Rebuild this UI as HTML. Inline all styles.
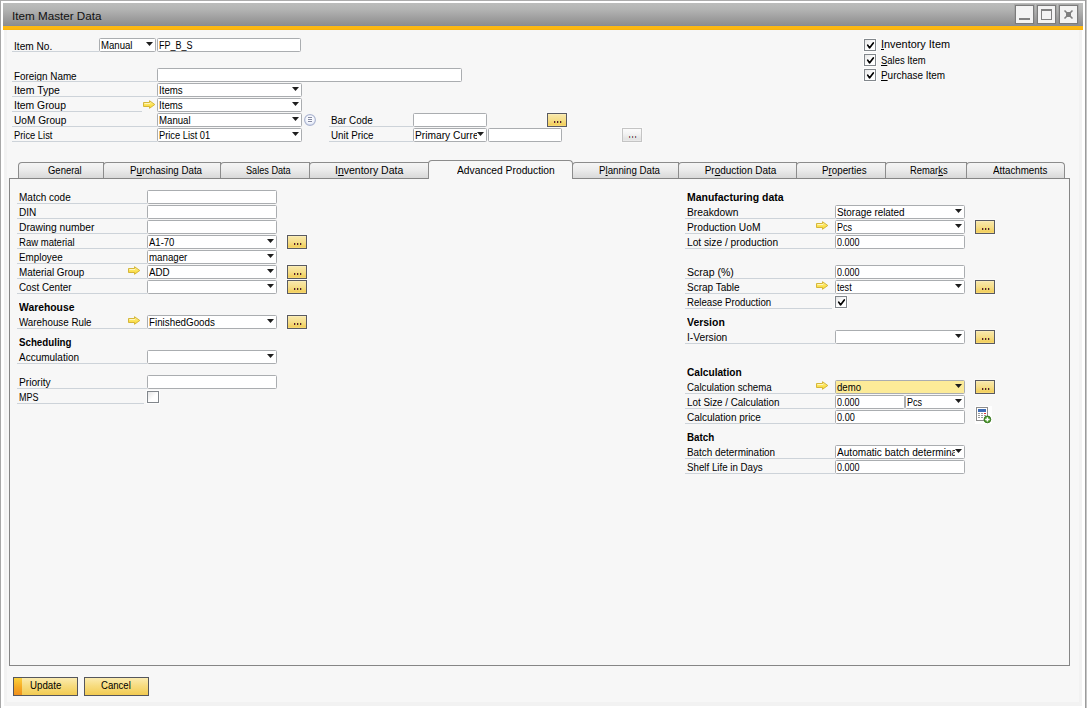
<!DOCTYPE html>
<html lang="en"><head><meta charset="utf-8"><title>Item Master Data</title>
<style>
html,body{margin:0;padding:0;}
body{width:1087px;height:708px;overflow:hidden;background:#fff;position:relative;
 font-family:"Liberation Sans",Arial,sans-serif;font-size:10px;line-height:12px;color:#000;}
#win{position:absolute;left:0;top:0;width:1087px;height:708px;overflow:hidden;background:#fff;}
#win *{position:absolute;box-sizing:content-box;}
.t{white-space:nowrap;height:12px;line-height:12px;transform-origin:0 50%;}
.t u{position:static;text-decoration:underline;text-underline-offset:1px;text-decoration-thickness:1px;}
#win .t u{position:static}
.ul{height:1px;display:block;}
.f{border:1px solid #aaadb0;border-radius:1.5px;background:#fff;overflow:hidden;}
.f .clip{left:0;top:0;height:12px;overflow:hidden;}
.yb{width:18px;height:12px;border:1px solid #595a62;background:linear-gradient(#fbefbe,#f8e6a4 12%,#f6de8a 50%,#f3d060 88%,#f7dc7c);box-shadow:0 0 0 1px rgba(255,255,255,.4);}
.yb b{width:1px;height:2px;background:#64122c;top:7px;box-shadow:1px 0 0 rgba(120,165,70,.6);}
.yb b:nth-child(1){left:6px}.yb b:nth-child(2){left:9px}.yb b:nth-child(3){left:12px}
.yb.dis{border-color:#c4c4c4;background:linear-gradient(#fbfbfb,#f3f3f3 40%,#e2e2e2 85%,#ededed);}
.yb.dis b{background:#a25c7a;box-shadow:1px 0 0 rgba(170,215,235,.9),-1px 0 0 rgba(235,235,180,.8);}
.cb{width:10px;height:10px;border:1px solid #82878c;background:linear-gradient(135deg,#e6e6e6,#fff 55%);box-shadow:0 0 0 1px rgba(255,255,255,.7);}
.cb svg{left:0;top:0}
.tab{height:15px;top:162px;border:1px solid #8c8c8c;border-bottom:none;border-radius:4px 0 0 0;
 background:linear-gradient(#f5f5f5,#ececec 45%,#d9d9d9);}
.tab.act{top:160px;height:18px;background:#f7f7f7;border-radius:4px 4px 0 0;border-color:#8c8c8c;}
.btn{height:17px;border:1px solid #55565c;background:linear-gradient(#fbebb0,#f7dc80 45%,#f2cb52);}
.wb{width:17px;height:17px;top:5px;border:1px solid #7b7b7b;background:#f3f3f3;box-shadow:0 0 0 1px rgba(140,140,140,.35);}
</style></head><body><div id="win">
<svg width="0" height="0" style="left:0;top:0"><defs>
<linearGradient id="ag" x1="0" y1="0" x2="0" y2="1"><stop offset="0" stop-color="#fdf09a"/><stop offset=".5" stop-color="#fce45c"/><stop offset="1" stop-color="#f9d326"/></linearGradient>
</defs></svg>

<div style="left:0;top:0;width:1087px;height:1px;background:#acacac"></div>
<div style="left:0;top:0;width:1px;height:708px;background:#a8a8a8"></div>
<div style="left:1085px;top:0;width:1px;height:708px;background:#9c9c9c"></div>
<div style="left:1086px;top:0;width:1px;height:708px;background:#c6c6c6"></div>
<div style="left:3px;top:3px;width:1080px;height:22px;background:linear-gradient(#bcbdbc,#b3b4b3 30%,#9e9e9e 70%,#8f8f8f)"></div>
<div style="left:3px;top:25px;width:1080px;height:1px;background:#878c98"></div>
<div style="left:3px;top:26px;width:1080px;height:4px;background:linear-gradient(#fcb914,#fcb711 70%,#f9b10a)"></div>
<div style="left:4px;top:30px;width:1078px;height:676px;background:#f2f2f2"></div>
<div style="left:7px;top:30px;width:1072px;height:672px;background:#f7f7f7"></div>
<span class="t" style="left:12.00px;top:9.65px;font-size:11.5px;line-height:13.8px;color:#111;transform:scaleX(1.0149);">Item Master Data</span>
<div class="wb" style="left:1015px">
<i style="left:3px;top:12px;width:11px;height:2px;background:#808080"></i>
</div>
<div class="wb" style="left:1037px">
<i style="left:3px;top:3px;width:9px;height:8px;border:1px solid #808080;border-top-width:2px"></i>
</div>
<div class="wb" style="left:1059px">
<svg width="17" height="17" viewBox="0 0 17 17" style="left:0;top:0"><path d="M4.5 4.5L12.5 12.5M12.5 4.5L4.5 12.5" stroke="#808080" stroke-width="1.6"/><rect x="6" y="6" width="5" height="5" fill="#808080"/></svg>
</div>
<span class="t" style="left:14.00px;top:41.00px;transform:scaleX(1.0136);">Item No.</span>
<i class="ul" style="left:12px;top:51px;width:87px;background:#cdd3d9"></i>
<div class="f" style="left:99px;top:38px;width:55px;height:12px;">
<span class="t" style="left:1.4px;top:1.00px;transform:scaleX(0.9605);">Manual</span>
<svg class="dd" width="7" height="4" viewBox="0 0 7 4" style="left:46px;top:3px"><path d="M0 0H7L3.5 4Z" fill="#1e1e1e"/></svg>
</div>
<div class="f" style="left:157px;top:38px;width:142px;height:12px;">
<span class="t" style="left:1.4px;top:1.00px;transform:scaleX(0.9022);">FP_B_S</span>
</div>
<span class="t" style="left:14.00px;top:71.00px;transform:scaleX(0.9881);">Foreign Name</span>
<i class="ul" style="left:12px;top:81px;width:145px;background:#cdd3d9"></i>
<span class="t" style="left:14.00px;top:85.00px;transform:scaleX(1.0498);">Item Type</span>
<i class="ul" style="left:12px;top:96px;width:145px;background:#cdd3d9"></i>
<span class="t" style="left:14.00px;top:100.00px;transform:scaleX(1.0377);">Item Group</span>
<i class="ul" style="left:12px;top:111px;width:130px;background:#cdd3d9"></i>
<span class="t" style="left:14.00px;top:115.00px;transform:scaleX(1.0120);">UoM Group</span>
<i class="ul" style="left:12px;top:126px;width:145px;background:#cdd3d9"></i>
<span class="t" style="left:14.00px;top:130.00px;transform:scaleX(0.9338);">Price List</span>
<i class="ul" style="left:12px;top:141px;width:145px;background:#cdd3d9"></i>
<div class="f" style="left:157px;top:68px;width:303px;height:12px;">
</div>
<div class="f" style="left:157px;top:83px;width:143px;height:12px;">
<span class="t" style="left:1.4px;top:1.00px;transform:scaleX(0.9694);">Items</span>
<svg class="dd" width="7" height="4" viewBox="0 0 7 4" style="left:134px;top:3px"><path d="M0 0H7L3.5 4Z" fill="#1e1e1e"/></svg>
</div>
<svg class="ar" width="13" height="10" viewBox="0 0 13 10" style="left:143px;top:100px"><path d="M0.5 2.5H6.5V0.7L11.8 4.5L6.5 8.3V6.5H0.5Z" fill="url(#ag)" stroke="#d0b02c" stroke-width=".9" stroke-linejoin="round"/><path d="M1.5 3.5H7" stroke="#fff6c0" stroke-width="1"/></svg>
<div class="f" style="left:157px;top:98px;width:143px;height:12px;">
<span class="t" style="left:1.4px;top:1.00px;transform:scaleX(0.9694);">Items</span>
<svg class="dd" width="7" height="4" viewBox="0 0 7 4" style="left:134px;top:3px"><path d="M0 0H7L3.5 4Z" fill="#1e1e1e"/></svg>
</div>
<div class="f" style="left:157px;top:113px;width:143px;height:12px;">
<span class="t" style="left:1.4px;top:1.00px;transform:scaleX(0.9636);">Manual</span>
<svg class="dd" width="7" height="4" viewBox="0 0 7 4" style="left:134px;top:3px"><path d="M0 0H7L3.5 4Z" fill="#1e1e1e"/></svg>
</div>
<div class="f" style="left:157px;top:128px;width:143px;height:12px;">
<span class="t" style="left:1.4px;top:1.00px;transform:scaleX(0.9305);">Price List 01</span>
<svg class="dd" width="7" height="4" viewBox="0 0 7 4" style="left:134px;top:3px"><path d="M0 0H7L3.5 4Z" fill="#1e1e1e"/></svg>
</div>
<svg width="12" height="12" viewBox="0 0 12 12" style="left:304px;top:114px"><defs><radialGradient id="cg" cx=".5" cy=".4" r=".6"><stop offset="0" stop-color="#fff"/><stop offset=".6" stop-color="#f4f6fd"/><stop offset="1" stop-color="#d4dcf0"/></radialGradient></defs><circle cx="6" cy="6" r="5.4" fill="url(#cg)" stroke="#acb5d0" stroke-width="1.1"/><path d="M4 3.5H8M4 5.5H8M4 7.5H8" stroke="#858aa2" stroke-width="1"/></svg>
<span class="t" style="left:331.00px;top:115.00px;transform:scaleX(0.9871);">Bar Code</span>
<i class="ul" style="left:329px;top:126px;width:84px;background:#cdd3d9"></i>
<div class="f" style="left:413px;top:113px;width:72px;height:12px;">
</div>
<span class="t" style="left:331.00px;top:130.00px;transform:scaleX(0.9805);">Unit Price</span>
<i class="ul" style="left:329px;top:141px;width:84px;background:#cdd3d9"></i>
<div class="f" style="left:413px;top:128px;width:72px;height:12px;">
<span class="clip" style="width:63px">
<span class="t" style="left:1.4px;top:1.00px;transform:scaleX(1.0218);">Primary Currency</span></span>
<svg class="dd" width="7" height="4" viewBox="0 0 7 4" style="left:63px;top:3px"><path d="M0 0H7L3.5 4Z" fill="#1e1e1e"/></svg>
</div>
<div class="f" style="left:488px;top:128px;width:72px;height:12px;">
</div>
<div class="yb" style="left:547px;top:113px"><b></b><b></b><b></b></div>
<div class="yb dis" style="left:622px;top:128px"><b></b><b></b><b></b></div>
<div class="cb" style="left:864px;top:39px">
<svg width="10" height="10" viewBox="0 0 10 10"><path d="M2.7 5.1L4.5 7.9L8.3 3" fill="none" stroke="#000" stroke-width="1.7" stroke-linecap="round" stroke-linejoin="round"/></svg>
</div>
<span class="t" style="left:881.00px;top:39.00px;transform:scaleX(1.0891);"><u>I</u>nventory Item</span>
<div class="cb" style="left:864px;top:54px">
<svg width="10" height="10" viewBox="0 0 10 10"><path d="M2.7 5.1L4.5 7.9L8.3 3" fill="none" stroke="#000" stroke-width="1.7" stroke-linecap="round" stroke-linejoin="round"/></svg>
</div>
<span class="t" style="left:881.00px;top:55.00px;transform:scaleX(0.9441);"><u>S</u>ales Item</span>
<div class="cb" style="left:864px;top:69px">
<svg width="10" height="10" viewBox="0 0 10 10"><path d="M2.7 5.1L4.5 7.9L8.3 3" fill="none" stroke="#000" stroke-width="1.7" stroke-linecap="round" stroke-linejoin="round"/></svg>
</div>
<span class="t" style="left:881.00px;top:70.00px;transform:scaleX(0.9927);"><u>P</u>urchase Item</span>
<div style="left:9px;top:178px;width:1059px;height:486px;border:1px solid #868686;background:#f7f7f7"></div>
<div class="tab" style="left:18px;width:84px;"></div>
<div class="tab" style="left:103px;width:116px;"></div>
<div class="tab" style="left:220px;width:88px;"></div>
<div class="tab" style="left:309px;width:118px;"></div>
<div class="tab act" style="left:428px;width:143px;"></div>
<div class="tab" style="left:572px;width:105px;"></div>
<div class="tab" style="left:678px;width:117px;"></div>
<div class="tab" style="left:796px;width:88px;"></div>
<div class="tab" style="left:885px;width:80px;"></div>
<div class="tab" style="left:966px;width:97px;border-radius:4px 4px 0 0;"></div>
<span class="t" style="left:48.00px;top:165.00px;transform:scaleX(0.9473);">General</span>
<span class="t" style="left:129.70px;top:165.00px;transform:scaleX(0.9739);">P<u>u</u>rchasing Data</span>
<span class="t" style="left:246.10px;top:165.00px;transform:scaleX(0.9138);">Sales Data</span>
<span class="t" style="left:335.40px;top:165.00px;transform:scaleX(1.0503);">I<u>n</u>ventory Data</span>
<span class="t" style="left:456.70px;top:165.00px;transform:scaleX(1.0288);">Advanced Production</span>
<span class="t" style="left:598.70px;top:165.00px;transform:scaleX(0.9710);">P<u>l</u>anning Data</span>
<span class="t" style="left:704.70px;top:165.00px;">Pr<u>o</u>duction Data</span>
<span class="t" style="left:821.60px;top:165.00px;transform:scaleX(0.9764);">P<u>r</u>operties</span>
<span class="t" style="left:910.30px;top:165.00px;transform:scaleX(0.9399);">Remar<u>k</u>s</span>
<span class="t" style="left:992.90px;top:165.00px;transform:scaleX(0.9770);">Attachments</span>
<span class="t" style="left:19.00px;top:192.00px;">Match code</span>
<i class="ul" style="left:17px;top:203px;width:130px;background:#cdd3d9"></i>
<div class="f" style="left:147px;top:190px;width:128px;height:12px;">
</div>
<span class="t" style="left:19.00px;top:207.00px;transform:scaleX(1.0045);">DIN</span>
<i class="ul" style="left:17px;top:218px;width:130px;background:#cdd3d9"></i>
<div class="f" style="left:147px;top:205px;width:128px;height:12px;">
</div>
<span class="t" style="left:19.00px;top:222.00px;transform:scaleX(1.0278);">Drawing number</span>
<i class="ul" style="left:17px;top:233px;width:130px;background:#cdd3d9"></i>
<div class="f" style="left:147px;top:220px;width:128px;height:12px;">
</div>
<span class="t" style="left:19.00px;top:237.00px;transform:scaleX(0.9529);">Raw material</span>
<i class="ul" style="left:17px;top:248px;width:130px;background:#cdd3d9"></i>
<div class="f" style="left:147px;top:235px;width:128px;height:12px;">
<span class="t" style="left:1.4px;top:1.00px;transform:scaleX(0.9519);">A1-70</span>
<svg class="dd" width="7" height="4" viewBox="0 0 7 4" style="left:119px;top:3px"><path d="M0 0H7L3.5 4Z" fill="#1e1e1e"/></svg>
</div>
<div class="yb" style="left:287px;top:235px"><b></b><b></b><b></b></div>
<span class="t" style="left:19.00px;top:252.00px;transform:scaleX(0.9828);">Employee</span>
<i class="ul" style="left:17px;top:263px;width:130px;background:#cdd3d9"></i>
<div class="f" style="left:147px;top:250px;width:128px;height:12px;">
<span class="t" style="left:1.4px;top:1.00px;transform:scaleX(0.9705);">manager</span>
<svg class="dd" width="7" height="4" viewBox="0 0 7 4" style="left:119px;top:3px"><path d="M0 0H7L3.5 4Z" fill="#1e1e1e"/></svg>
</div>
<span class="t" style="left:19.00px;top:267.00px;transform:scaleX(0.9874);">Material Group</span>
<i class="ul" style="left:17px;top:278px;width:130px;background:#cdd3d9"></i>
<svg class="ar" width="13" height="10" viewBox="0 0 13 10" style="left:128px;top:266px"><path d="M0.5 2.5H6.5V0.7L11.8 4.5L6.5 8.3V6.5H0.5Z" fill="url(#ag)" stroke="#d0b02c" stroke-width=".9" stroke-linejoin="round"/><path d="M1.5 3.5H7" stroke="#fff6c0" stroke-width="1"/></svg>
<div class="f" style="left:147px;top:265px;width:128px;height:12px;">
<span class="t" style="left:1.4px;top:1.00px;transform:scaleX(0.9757);">ADD</span>
<svg class="dd" width="7" height="4" viewBox="0 0 7 4" style="left:119px;top:3px"><path d="M0 0H7L3.5 4Z" fill="#1e1e1e"/></svg>
</div>
<div class="yb" style="left:287px;top:265px"><b></b><b></b><b></b></div>
<span class="t" style="left:19.00px;top:282.00px;transform:scaleX(0.9840);">Cost Center</span>
<i class="ul" style="left:17px;top:293px;width:130px;background:#cdd3d9"></i>
<div class="f" style="left:147px;top:280px;width:128px;height:12px;">
<svg class="dd" width="7" height="4" viewBox="0 0 7 4" style="left:119px;top:3px"><path d="M0 0H7L3.5 4Z" fill="#1e1e1e"/></svg>
</div>
<div class="yb" style="left:287px;top:280px"><b></b><b></b><b></b></div>
<span class="t" style="left:19.00px;top:302.00px;font-weight:bold;transform:scaleX(1.0350);">Warehouse</span>
<span class="t" style="left:19.00px;top:317.00px;transform:scaleX(0.9783);">Warehouse Rule</span>
<i class="ul" style="left:17px;top:328px;width:130px;background:#cdd3d9"></i>
<svg class="ar" width="13" height="10" viewBox="0 0 13 10" style="left:128px;top:316px"><path d="M0.5 2.5H6.5V0.7L11.8 4.5L6.5 8.3V6.5H0.5Z" fill="url(#ag)" stroke="#d0b02c" stroke-width=".9" stroke-linejoin="round"/><path d="M1.5 3.5H7" stroke="#fff6c0" stroke-width="1"/></svg>
<div class="f" style="left:147px;top:315px;width:128px;height:12px;">
<span class="t" style="left:1.4px;top:1.00px;transform:scaleX(0.9798);">FinishedGoods</span>
<svg class="dd" width="7" height="4" viewBox="0 0 7 4" style="left:119px;top:3px"><path d="M0 0H7L3.5 4Z" fill="#1e1e1e"/></svg>
</div>
<div class="yb" style="left:287px;top:315px"><b></b><b></b><b></b></div>
<span class="t" style="left:19.00px;top:337.00px;font-weight:bold;transform:scaleX(0.9743);">Scheduling</span>
<span class="t" style="left:19.00px;top:352.00px;">Accumulation</span>
<i class="ul" style="left:17px;top:363px;width:130px;background:#cdd3d9"></i>
<div class="f" style="left:147px;top:350px;width:128px;height:12px;">
<svg class="dd" width="7" height="4" viewBox="0 0 7 4" style="left:119px;top:3px"><path d="M0 0H7L3.5 4Z" fill="#1e1e1e"/></svg>
</div>
<span class="t" style="left:19.00px;top:377.00px;transform:scaleX(1.0189);">Priority</span>
<i class="ul" style="left:17px;top:388px;width:130px;background:#cdd3d9"></i>
<div class="f" style="left:147px;top:375px;width:128px;height:12px;">
</div>
<span class="t" style="left:19.00px;top:392.00px;transform:scaleX(0.8998);">MPS</span>
<i class="ul" style="left:17px;top:403px;width:127px;background:#cdd3d9"></i>
<div class="cb" style="left:147px;top:391px">
</div>
<span class="t" style="left:687.00px;top:192.00px;font-weight:bold;transform:scaleX(1.0464);">Manufacturing data</span>
<span class="t" style="left:687.00px;top:207.00px;transform:scaleX(1.0275);">Breakdown</span>
<i class="ul" style="left:685px;top:218px;width:150px;background:#cdd3d9"></i>
<div class="f" style="left:835px;top:205px;width:128px;height:12px;">
<span class="t" style="left:1.4px;top:1.00px;transform:scaleX(0.9887);">Storage related</span>
<svg class="dd" width="7" height="4" viewBox="0 0 7 4" style="left:119px;top:3px"><path d="M0 0H7L3.5 4Z" fill="#1e1e1e"/></svg>
</div>
<span class="t" style="left:687.00px;top:222.00px;transform:scaleX(1.0238);">Production UoM</span>
<i class="ul" style="left:685px;top:233px;width:150px;background:#cdd3d9"></i>
<svg class="ar" width="13" height="10" viewBox="0 0 13 10" style="left:816px;top:221px"><path d="M0.5 2.5H6.5V0.7L11.8 4.5L6.5 8.3V6.5H0.5Z" fill="url(#ag)" stroke="#d0b02c" stroke-width=".9" stroke-linejoin="round"/><path d="M1.5 3.5H7" stroke="#fff6c0" stroke-width="1"/></svg>
<div class="f" style="left:835px;top:220px;width:128px;height:12px;">
<span class="t" style="left:1.4px;top:1.00px;transform:scaleX(0.9058);">Pcs</span>
<svg class="dd" width="7" height="4" viewBox="0 0 7 4" style="left:119px;top:3px"><path d="M0 0H7L3.5 4Z" fill="#1e1e1e"/></svg>
</div>
<div class="yb" style="left:975px;top:220px"><b></b><b></b><b></b></div>
<span class="t" style="left:687.00px;top:237.00px;transform:scaleX(1.0191);">Lot size / production</span>
<i class="ul" style="left:685px;top:248px;width:150px;background:#cdd3d9"></i>
<div class="f" style="left:835px;top:235px;width:128px;height:12px;">
<span class="t" style="left:1.4px;top:1.00px;transform:scaleX(0.8992);">0.000</span>
</div>
<span class="t" style="left:687.00px;top:267.00px;transform:scaleX(1.0528);">Scrap (%)</span>
<i class="ul" style="left:685px;top:278px;width:150px;background:#cdd3d9"></i>
<div class="f" style="left:835px;top:265px;width:128px;height:12px;">
<span class="t" style="left:1.4px;top:1.00px;transform:scaleX(0.8992);">0.000</span>
</div>
<span class="t" style="left:687.00px;top:282.00px;">Scrap Table</span>
<i class="ul" style="left:685px;top:293px;width:150px;background:#cdd3d9"></i>
<svg class="ar" width="13" height="10" viewBox="0 0 13 10" style="left:816px;top:281px"><path d="M0.5 2.5H6.5V0.7L11.8 4.5L6.5 8.3V6.5H0.5Z" fill="url(#ag)" stroke="#d0b02c" stroke-width=".9" stroke-linejoin="round"/><path d="M1.5 3.5H7" stroke="#fff6c0" stroke-width="1"/></svg>
<div class="f" style="left:835px;top:280px;width:128px;height:12px;">
<span class="t" style="left:1.4px;top:1.00px;transform:scaleX(0.9121);">test</span>
<svg class="dd" width="7" height="4" viewBox="0 0 7 4" style="left:119px;top:3px"><path d="M0 0H7L3.5 4Z" fill="#1e1e1e"/></svg>
</div>
<div class="yb" style="left:975px;top:280px"><b></b><b></b><b></b></div>
<span class="t" style="left:687.00px;top:297.00px;transform:scaleX(0.9637);">Release Production</span>
<i class="ul" style="left:685px;top:308px;width:147px;background:#cdd3d9"></i>
<div class="cb" style="left:835px;top:296px">
<svg width="10" height="10" viewBox="0 0 10 10"><path d="M2.7 5.1L4.5 7.9L8.3 3" fill="none" stroke="#000" stroke-width="1.7" stroke-linecap="round" stroke-linejoin="round"/></svg>
</div>
<span class="t" style="left:687.00px;top:317.00px;font-weight:bold;transform:scaleX(1.0463);">Version</span>
<span class="t" style="left:687.00px;top:332.00px;transform:scaleX(1.0213);">I-Version</span>
<i class="ul" style="left:685px;top:343px;width:150px;background:#cdd3d9"></i>
<div class="f" style="left:835px;top:330px;width:128px;height:12px;">
<svg class="dd" width="7" height="4" viewBox="0 0 7 4" style="left:119px;top:3px"><path d="M0 0H7L3.5 4Z" fill="#1e1e1e"/></svg>
</div>
<div class="yb" style="left:975px;top:330px"><b></b><b></b><b></b></div>
<span class="t" style="left:687.00px;top:367.00px;font-weight:bold;transform:scaleX(1.0150);">Calculation</span>
<span class="t" style="left:687.00px;top:382.00px;transform:scaleX(0.9707);">Calculation schema</span>
<i class="ul" style="left:685px;top:393px;width:150px;background:#cdd3d9"></i>
<svg class="ar" width="13" height="10" viewBox="0 0 13 10" style="left:816px;top:381px"><path d="M0.5 2.5H6.5V0.7L11.8 4.5L6.5 8.3V6.5H0.5Z" fill="url(#ag)" stroke="#d0b02c" stroke-width=".9" stroke-linejoin="round"/><path d="M1.5 3.5H7" stroke="#fff6c0" stroke-width="1"/></svg>
<div class="f" style="left:835px;top:380px;width:128px;height:12px;background:#fceb98;">
<span class="t" style="left:1.4px;top:1.00px;transform:scaleX(0.9595);">demo</span>
<svg class="dd" width="7" height="4" viewBox="0 0 7 4" style="left:119px;top:3px"><path d="M0 0H7L3.5 4Z" fill="#1e1e1e"/></svg>
</div>
<div class="yb" style="left:975px;top:380px"><b></b><b></b><b></b></div>
<span class="t" style="left:687.00px;top:397.00px;transform:scaleX(0.9836);">Lot Size / Calculation</span>
<i class="ul" style="left:685px;top:408px;width:150px;background:#cdd3d9"></i>
<div class="f" style="left:835px;top:395px;width:68px;height:12px;">
<span class="t" style="left:1.4px;top:1.00px;transform:scaleX(0.8992);">0.000</span>
</div>
<div class="f" style="left:905px;top:395px;width:58px;height:12px;">
<span class="t" style="left:1.4px;top:1.00px;transform:scaleX(0.9058);">Pcs</span>
<svg class="dd" width="7" height="4" viewBox="0 0 7 4" style="left:49px;top:3px"><path d="M0 0H7L3.5 4Z" fill="#1e1e1e"/></svg>
</div>
<span class="t" style="left:687.00px;top:412.00px;">Calculation price</span>
<i class="ul" style="left:685px;top:423px;width:150px;background:#cdd3d9"></i>
<div class="f" style="left:835px;top:410px;width:128px;height:12px;">
<span class="t" style="left:1.4px;top:1.00px;transform:scaleX(0.9147);">0.00</span>
</div>
<span class="t" style="left:687.00px;top:432.00px;font-weight:bold;transform:scaleX(0.9827);">Batch</span>
<span class="t" style="left:687.00px;top:447.00px;transform:scaleX(0.9906);">Batch determination</span>
<i class="ul" style="left:685px;top:458px;width:150px;background:#cdd3d9"></i>
<div class="f" style="left:835px;top:445px;width:128px;height:12px;">
<span class="clip" style="width:119px">
<span class="t" style="left:1.4px;top:1.00px;transform:scaleX(1.0099);">Automatic batch determination</span></span>
<svg class="dd" width="7" height="4" viewBox="0 0 7 4" style="left:119px;top:3px"><path d="M0 0H7L3.5 4Z" fill="#1e1e1e"/></svg>
</div>
<span class="t" style="left:687.00px;top:462.00px;transform:scaleX(0.9728);">Shelf Life in Days</span>
<i class="ul" style="left:685px;top:473px;width:150px;background:#cdd3d9"></i>
<div class="f" style="left:835px;top:460px;width:128px;height:12px;">
<span class="t" style="left:1.4px;top:1.00px;transform:scaleX(0.8992);">0.000</span>
</div>
<svg width="17" height="18" viewBox="0 0 17 18" style="left:975px;top:406px">
<rect x="0" y="0" width="17" height="18" fill="#fff" opacity=".85"/>
<rect x="1.5" y="1.5" width="11" height="13" fill="#fff" stroke="#8c8c8c" stroke-width="1"/>
<rect x="3" y="3" width="8" height="3" fill="#3f6db6"/>
<g fill="#9a9a9a"><rect x="3" y="7" width="2" height="1"/><rect x="6" y="7" width="2" height="1"/>
<rect x="3" y="9" width="2" height="1"/><rect x="6" y="9" width="2" height="1"/><rect x="9" y="9" width="2" height="1"/>
<rect x="3" y="11" width="2" height="1"/><rect x="6" y="11" width="2" height="1"/></g>
<rect x="9" y="7" width="2" height="1" fill="#e0303a"/>
<circle cx="12.4" cy="13.4" r="3.4" fill="#4a9a28" stroke="#2f6d16" stroke-width=".8"/>
<path d="M12.4 11.2V15.6M10.2 13.4H14.6" stroke="#fff" stroke-width="1.5"/></svg>
<div class="btn" style="left:13px;top:677px;width:63px"><i style="left:0;top:0;width:8px;height:17px;background:linear-gradient(#fbd23c,#f5a823 55%,#f0901c)"></i></div>
<div class="btn" style="left:84px;top:677px;width:63px"></div>
<span class="t" style="left:29.80px;top:680.00px;transform:scaleX(0.9707);">Update</span>
<span class="t" style="left:101.30px;top:680.00px;transform:scaleX(0.9574);">Cancel</span>
</div></body></html>
